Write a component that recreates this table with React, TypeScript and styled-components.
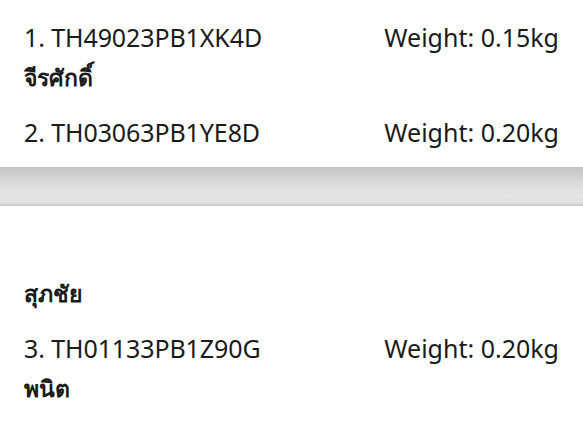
import styled, { createGlobalStyle } from "styled-components"

const Global = createGlobalStyle`
  body {
    margin: 0;
    background: #ffffff;
    font-family: "Noto Sans", "Open Sans", sans-serif;
    color: #1b1b1b;
  }
`

const Sheet = styled.section<{ $top: number; $bottom: number }>`
  padding: ${(p) => p.$top}px 24px ${(p) => p.$bottom}px 24px;
  background: #ffffff;
`

const PageBreak = styled.div`
  height: 39px;
  background: linear-gradient(
    to bottom,
    #c4c4c4 0%,
    #cbcbcb 15%,
    #dcdcdc 45%,
    #e4e4e4 70%,
    #e2e2e2 90%,
    #c9c9c9 100%
  );
`

const Row = styled.div`
  display: flex;
  justify-content: space-between;
  align-items: baseline;
  font-size: 25px;
  line-height: 40px;
`

const Code = styled.span`
  letter-spacing: -0.1px;
`

const Weight = styled.span``

const Name = styled.div<{ $gap: number }>`
  font-size: 23px;
  font-weight: 600;
  line-height: 40px;
  margin-bottom: ${(p) => p.$gap}px;
`

const first = [
  { code: "1. TH49023PB1XK4D", weight: "0.15kg", name: "จีรศักดิ์" },
]

export default function App() {
  return (
    <>
      <Global />
      <Sheet $top={17} $bottom={15}>
        {first.map((p) => (
          <div key={p.code}>
            <Row>
              <Code>{p.code}</Code>
              <Weight>Weight: {p.weight}</Weight>
            </Row>
            <Name $gap={15}>{p.name}</Name>
          </div>
        ))}
        <Row>
          <Code>2. TH03063PB1YE8D</Code>
          <Weight>Weight: 0.20kg</Weight>
        </Row>
      </Sheet>
      <PageBreak />
      <Sheet $top={67} $bottom={20}>
        <Name $gap={15}>สุภชัย</Name>
        <Row>
          <Code>3. TH01133PB1Z90G</Code>
          <Weight>Weight: 0.20kg</Weight>
        </Row>
        <Name $gap={0}>พนิต</Name>
      </Sheet>
    </>
  )
}
